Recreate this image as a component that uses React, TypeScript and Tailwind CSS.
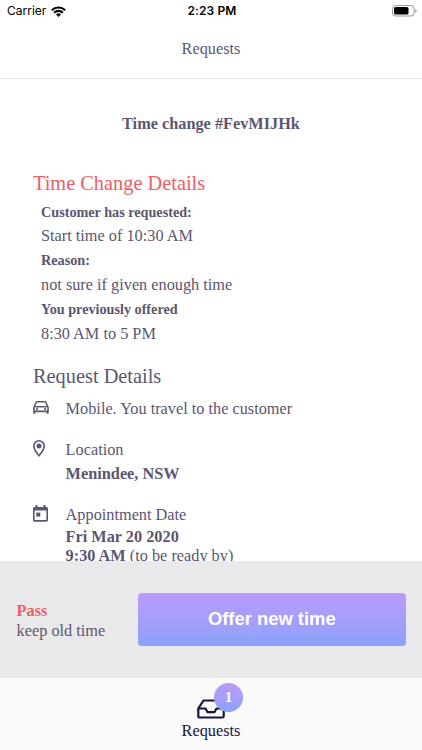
import React from 'react';

function CarIcon() {
  return (
    <svg className="mt-[4px] shrink-0" width="16" height="14" viewBox="0 0 16 14" fill="none" stroke="#5a5671" strokeWidth="1.6" strokeLinejoin="round">
      <path d="M1 6.2 3 1.7c.2-.6.6-.9 1.200-.9h7.600c.6 0 1 .3 1.200.9l2 4.500v4.200H1zM2.200 5.700h11.600" />
      <path d="M1.400 10v2.800M14.600 10v2.800" strokeWidth="2" />
      <circle cx="4" cy="8.100" r="1.100" fill="#5a5671" stroke="none" />
      <circle cx="12" cy="8.100" r="1.100" fill="#5a5671" stroke="none" />
    </svg>
  );
}

function PinIcon() {
  return (
    <svg className="mt-[2px] shrink-0" width="12" height="17" viewBox="0 0 12 17">
      <path d="M6 .8C3.100.8.800 3.100.800 6c0 3.700 5.200 9.700 5.200 9.700s5.200-6 5.200-9.700C11.200 3.100 8.900.800 6 .8z" fill="none" stroke="#5a5671" strokeWidth="1.600" />
      <circle cx="6" cy="6.100" r="2.500" fill="#5a5671" />
    </svg>
  );
}

function CalendarIcon() {
  return (
    <svg className="mt-[2px] shrink-0" width="15" height="17" viewBox="0 0 15 17" fill="#5a5671">
      <path fillRule="evenodd" d="M2.500 0h2v2h6V0h2v2h.8c.9 0 1.700.7 1.700 1.600v11.500c0 .9-.8 1.600-1.700 1.600H1.700C.8 16.700 0 16 0 15.100V3.600C0 2.700.8 2 1.700 2h.8zM1.600 5.500v9.600h11.800V5.500z" />
      <rect x="3.300" y="7.600" width="4" height="4" />
    </svg>
  );
}

export default function App() {
  return (
    <div className="flex h-[750px] w-[422px] flex-col overflow-hidden bg-white font-['Liberation_Serif',serif] text-[16.3px] text-[#5b5671]">
      <header className="h-[79px] shrink-0 border-b border-[#e6e6e8]">
        <div className="flex h-[22px] items-center justify-between pl-[7px] pr-[6px] font-[Inter,sans-serif] text-[12px] text-black">
          <div className="flex w-[80px] items-center gap-[5px]">
            <span>Carrier</span>
            <svg width="15" height="11" viewBox="0 0 15 11" fill="none" stroke="black" strokeWidth="2.1">
              <path d="M.8 4.200a9.500 9.500 0 0 1 13.400 0M3.100 6.700a6.200 6.200 0 0 1 8.800 0" />
              <path d="M5 8.400a3.600 3.600 0 0 1 5 0L7.500 11z" fill="black" stroke="none" />
            </svg>
          </div>
          <span className="font-semibold tracking-[0.1px]">2:23 PM</span>
          <div className="-mr-px flex w-[80px] justify-end">
            <svg width="25" height="12" viewBox="0 0 25 12">
              <rect x=".5" y=".5" width="21.500" height="10.500" rx="3" fill="none" stroke="#999" />
              <rect x="2" y="2" width="14.500" height="7.500" rx="1.600" />
              <path d="M23.300 4v4c1.700-.8 1.700-3.200 0-4" fill="#999" />
            </svg>
          </div>
        </div>
        <h1 className="pt-[17px] text-center leading-5">Requests</h1>
      </header>

      <main className="min-h-0 flex-1 overflow-hidden px-[33px]">
        <h2 className="pt-[35px] text-center font-bold leading-5">Time change #FevMIJHk</h2>
        <h3 className="mt-[37px] text-[20.35px] leading-6 text-[#ef5c64]">Time Change Details</h3>
        <div className="pl-2 pt-[4.6px] leading-[24.4px]">
          <p className="text-[14.2px] font-bold">Customer has requested:</p>
          <p>Start time of 10:30 AM</p>
          <p className="text-[14.2px] font-bold">Reason:</p>
          <p>not sure if given enough time</p>
          <p className="text-[14.2px] font-bold">You previously offered</p>
          <p>8:30 AM to 5 PM</p>
        </div>
        <h3 className="mt-[18.400px] text-[20.35px] leading-6">Request Details</h3>
        <div className="mt-[9px] grid grid-cols-[32.600px_1fr] leading-6">
          <CarIcon />
          <p className="pb-[17px]">Mobile. You travel to the customer</p>
          <PinIcon />
          <div className="pb-[17px]">
            <p>Location</p>
            <p className="font-bold">Menindee, NSW</p>
          </div>
          <CalendarIcon />
          <div>
            <p>Appointment Date</p>
            <div className="leading-[19px]">
              <p className="font-bold">Fri Mar 20 2020</p>
              <p><strong>9:30 AM</strong> (to be ready by)</p>
            </div>
          </div>
        </div>
      </main>

      <section className="flex h-[117px] shrink-0 items-center bg-[#e9e9eb] pl-[16.600px] pr-4 leading-[19.500px]">
        <div className="w-[121px] pt-[2px]">
          <p className="font-bold text-[#ef5c64]">Pass</p>
          <p>keep old time</p>
        </div>
        <button className="h-[53px] flex-1 rounded-[4px] bg-linear-to-b from-[#bb9afb] to-[#8ba2fa] pb-px font-['Liberation_Sans',sans-serif] text-[18.400px] font-bold text-white">Offer new time</button>
      </section>
      <footer className="flex h-[72px] shrink-0 flex-col items-center bg-[#fafafa] pt-[20px] text-[#17133a]">
        <div className="relative h-[21px] w-7">
          <svg width="28" height="21" viewBox="0 0 28 21" fill="none" stroke="#17133a" strokeWidth="2.200" strokeLinejoin="round">
            <path d="M1.300 10.500 6.500 2.500h15l5.200 8v7.700c0 .7-.5 1.300-1.300 1.300H2.600c-.8 0-1.300-.5-1.300-1.300zM1.300 10.500h7.200l2.100 3.700h6.800l2.100-3.700h7.200" />
          </svg>
          <span className="absolute -top-[15px] left-[17px] flex size-[29px] items-center justify-center rounded-full bg-linear-to-b from-[#bb9afb] to-[#8ba2fa] text-[15px] font-bold text-white">1</span>
        </div>
        <span className="leading-6">Requests</span>
      </footer>
    </div>
  );
}
